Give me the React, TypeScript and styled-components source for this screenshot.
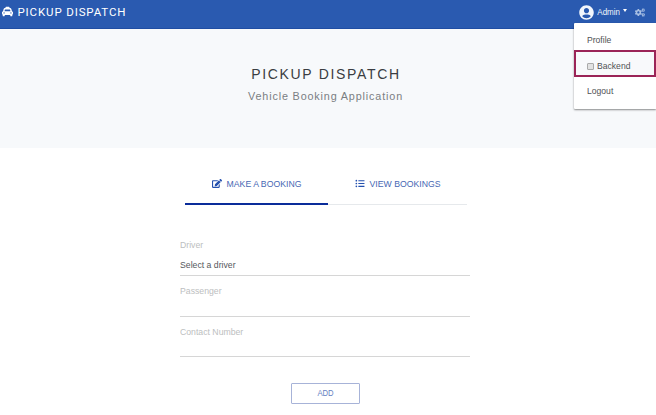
import React from "react";
import styled, { createGlobalStyle } from "styled-components";
import { FaTaxi, FaCogs, FaUserCircle, FaEdit, FaListUl } from "react-icons/fa";

const GlobalStyle = createGlobalStyle`
  * { box-sizing: border-box; }
  body { margin: 0; background: #fff; overflow: hidden; font-family: "Liberation Sans", Arial, sans-serif; }
`;

const Page = styled.div`
  width: 656px;
  height: 415px;
  overflow: hidden;
`;

const TallText = styled.span`
  display: inline-block;
  transform: scaleY(1.14);
`;

const Navbar = styled.header`
  position: relative;
  display: flex;
  justify-content: space-between;
  height: 29px;
  padding: 0 11px 4px 2px;
  background: #2a5ab0;
  border-bottom: 1px solid #1f4da3;
  color: #fff;
`;

const Brand = styled.div`
  display: flex;
  align-items: center;
  gap: 4.5px;
  padding-bottom: 1px;
  font: 400 11.5px/14px "Roboto", sans-serif;
  letter-spacing: 0.87px;
  white-space: nowrap;
  svg { width: 11px; height: 11px; }
`;

const UserMenu = styled.div`
  display: flex;
  align-items: center;
  font-size: 8px;
  color: #f2f6fc;
`;

const Avatar = styled(FaUserCircle)`
  width: 15px;
  height: 15px;
  margin-right: 3px;
`;

const Caret = styled.span`
  margin: -3px 8px 0 3px;
  border: 2.5px solid transparent;
  border-top: 3px solid #fff;
  border-bottom: 0;
`;

const Settings = styled(FaCogs)`
  width: 10px;
  height: 9px;
  color: #a9c0e4;
`;

const Dropdown = styled.nav`
  position: absolute;
  z-index: 1;
  top: 23px;
  right: 0;
  width: 82px;
  height: 86px;
  padding-top: 4px;
  background: #fff;
  border-radius: 1px 0 0 1px;
  box-shadow: 0 1px 2px rgba(0, 0, 0, 0.45);
`;

const MenuItem = styled.div<{ $marked?: boolean }>`
  display: flex;
  align-items: center;
  gap: 3px;
  height: ${(p) => (p.$marked ? 27 : 26)}px;
  margin-top: ${(p) => (p.$marked ? -3 : 0)}px;
  padding-top: ${(p) => (p.$marked ? 4 : 0)}px;
  padding-left: ${(p) => (p.$marked ? 11 : 13)}px;
  border: ${(p) => (p.$marked ? "2px solid #9b2457" : "0")};
  background: ${(p) => (p.$marked ? "#f8f9fb" : "transparent")};
  color: #505254;
  font-size: 8.6px;
  & + & + & { margin-top: 1px; }
`;

const Checkbox = styled.span`
  width: 7px;
  height: 7px;
  margin-top: 1px;
  border: 1px solid #aaa;
  border-radius: 1px;
  background: #e2e2e2;
`;

const Hero = styled.section`
  height: 119px;
  padding-top: 36px;
  background: #f7f9fb;
  text-align: center;
`;

const Title = styled.h1`
  margin: 0;
  font-size: 14px;
  font-weight: 400;
  line-height: 18px;
  letter-spacing: 1.67px;
  text-indent: -4px;
  color: #3a3d42;
`;

const Subtitle = styled.p`
  margin: 5px 0 0;
  font-size: 10.8px;
  line-height: 16px;
  letter-spacing: 0.85px;
  text-indent: -5px;
  color: #7a7e82;
`;

const Tabs = styled.div`
  display: flex;
  width: 282px;
  height: 57px;
  margin-left: 185px;
`;

const Tab = styled.div<{ $active?: boolean }>`
  display: flex;
  align-items: center;
  justify-content: center;
  gap: 5px;
  width: ${(p) => (p.$active ? 143 : 139)}px;
  padding-top: ${(p) => (p.$active ? 16 : 15)}px;
  border-bottom: ${(p) => (p.$active ? "2px solid #0a2c9a" : "1px solid #e6e9ec")};
  color: #4767b4;
  font-size: 8.7px;
  white-space: nowrap;
  svg { width: 10px; height: 9px; color: #2450ae; }
`;

const Form = styled.form`
  display: flex;
  flex-direction: column;
  width: 290px;
  margin: 34px 0 0 180px;
`;

const Field = styled.div<{ $height: number }>`
  height: ${(p) => p.$height}px;
  border-bottom: 1px solid #d6d6d6;
  font-size: 8.7px;
`;

const Label = styled.div<{ $offset: number }>`
  padding-top: ${(p) => p.$offset}px;
  line-height: 12px;
  color: #bcbec0;
`;

const Value = styled.div`
  margin-top: 8px;
  line-height: 12px;
  color: #55585c;
`;

const AddButton = styled.button`
  width: 69px;
  height: 21px;
  margin: 26px 0 0 111px;
  padding: 0;
  border: 1px solid #a7b3d8;
  border-radius: 1px;
  background: #fff;
  color: #6681c2;
  font: 7.7px "Liberation Sans", Arial, sans-serif;
`;

export default function App() {
  return (
    <Page>
      <GlobalStyle />
      <Navbar>
        <Brand><FaTaxi />PICKUP DISPATCH</Brand>
        <UserMenu><Avatar /><TallText>Admin</TallText><Caret /><Settings /></UserMenu>
        <Dropdown>
          <MenuItem><TallText>Profile</TallText></MenuItem>
          <MenuItem $marked><Checkbox /><TallText>Backend</TallText></MenuItem>
          <MenuItem><TallText>Logout</TallText></MenuItem>
        </Dropdown>
      </Navbar>
      <Hero>
        <Title>PICKUP DISPATCH</Title>
        <Subtitle>Vehicle Booking Application</Subtitle>
      </Hero>
      <Tabs>
        <Tab $active><FaEdit /><TallText>MAKE A BOOKING</TallText></Tab>
        <Tab><FaListUl /><TallText>VIEW BOOKINGS</TallText></Tab>
      </Tabs>
      <Form>
        <Field $height={37}>
          <Label $offset={0}><TallText>Driver</TallText></Label>
          <Value><TallText>Select a driver</TallText></Value>
        </Field>
        <Field $height={41}><Label $offset={9}><TallText>Passenger</TallText></Label></Field>
        <Field $height={40}><Label $offset={9}><TallText>Contact Number</TallText></Label></Field>
        <AddButton type="button"><TallText>ADD</TallText></AddButton>
      </Form>
    </Page>
  );
}
